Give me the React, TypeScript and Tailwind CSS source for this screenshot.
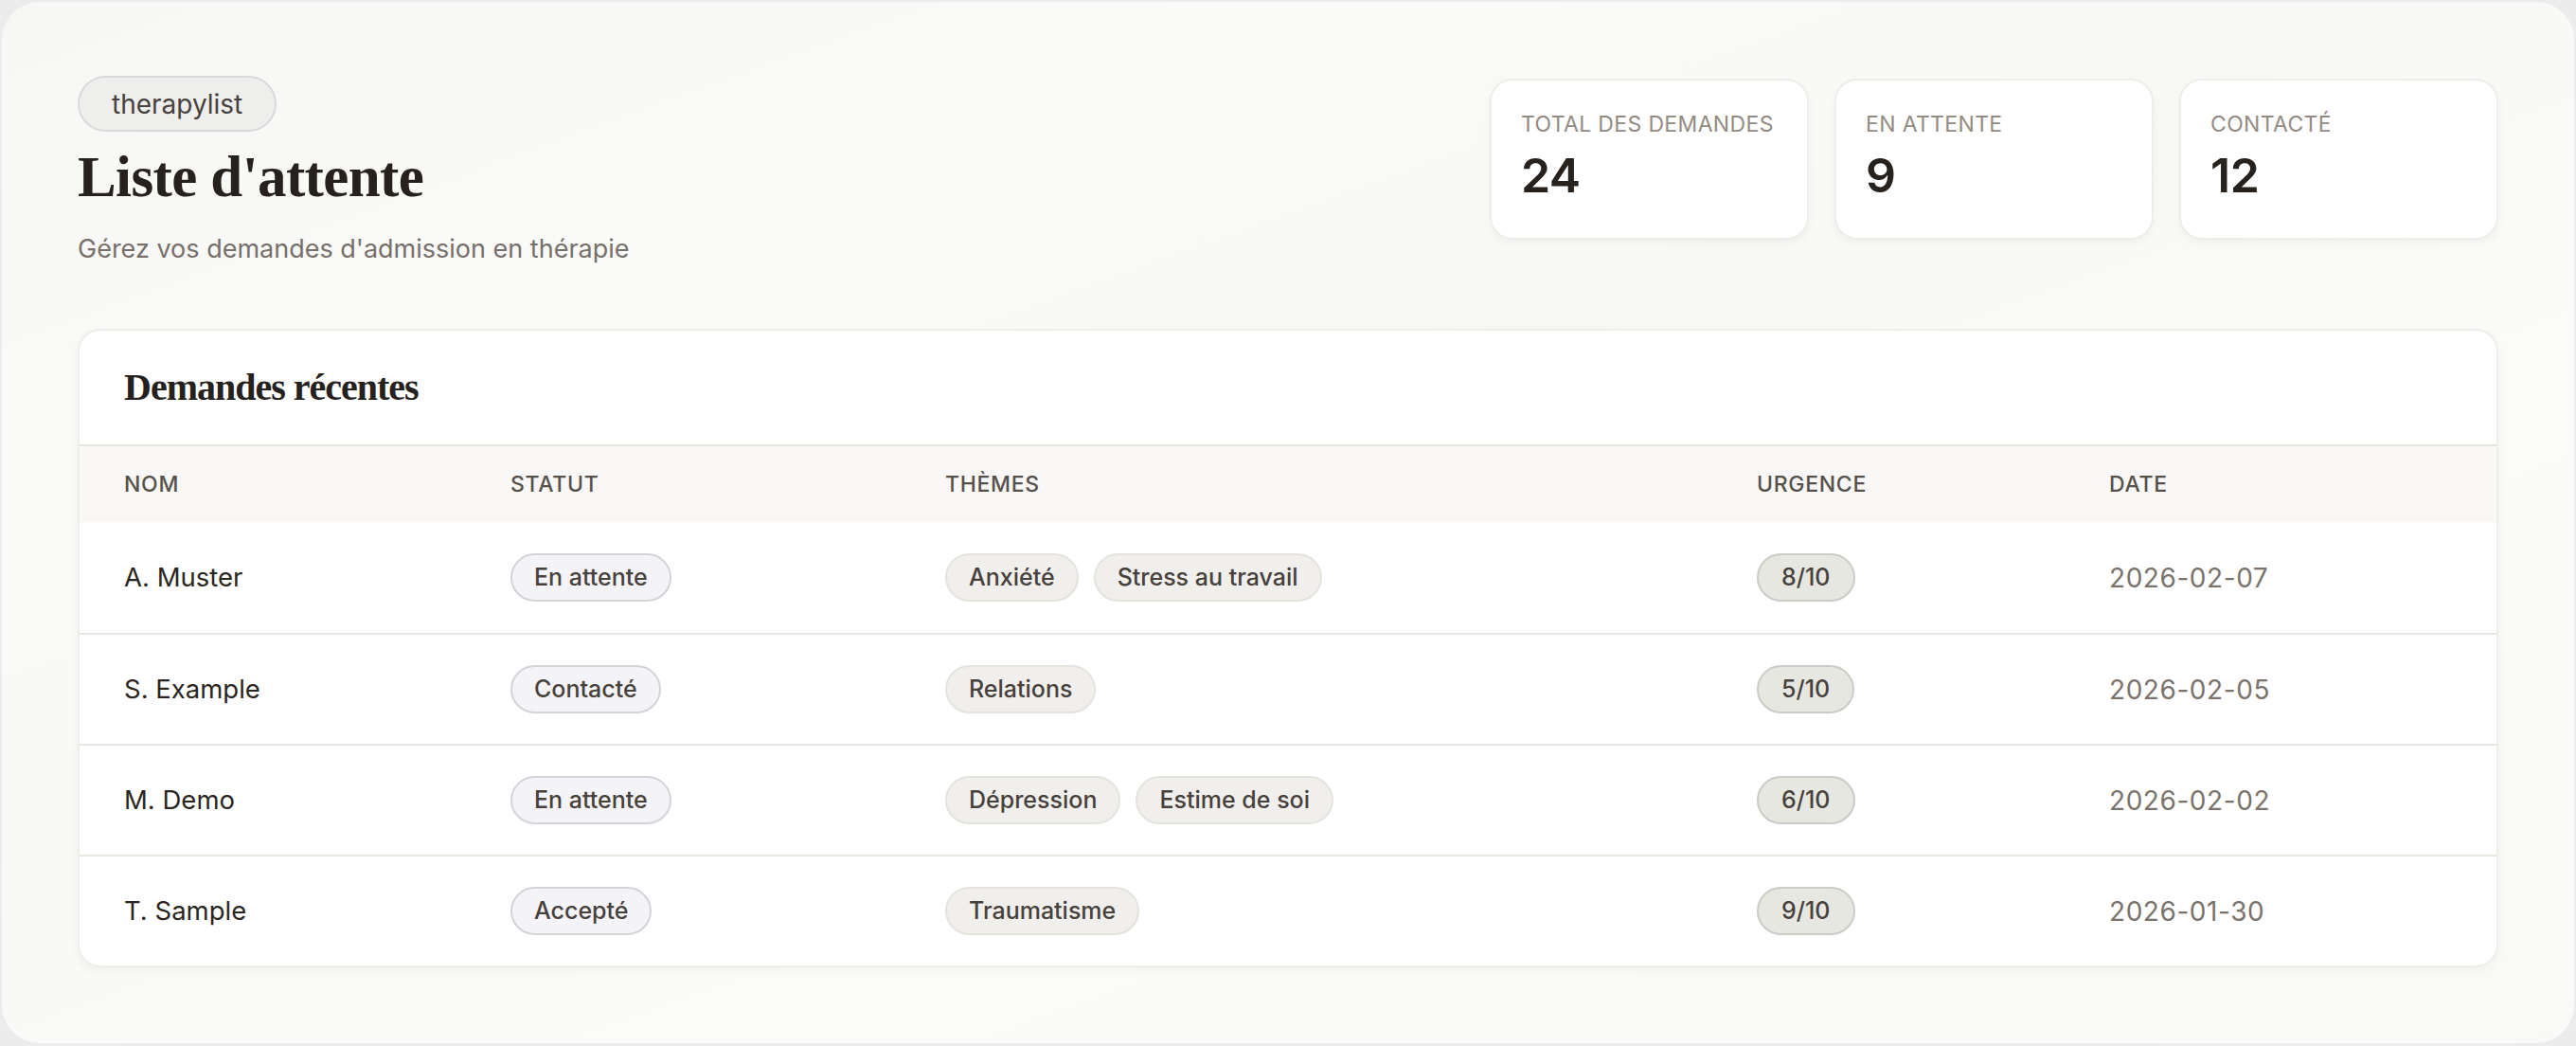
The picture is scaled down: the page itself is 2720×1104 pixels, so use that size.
import React from "react";

const sans = "font-['Inter','Noto_Sans',sans-serif]";
const serif = "font-['Liberation_Serif','DejaVu_Serif',serif]";

type Row = {
  name: string;
  status: string;
  themes: string[];
  urgency: string;
  date: string;
};

const rows: Row[] = [
  { name: "A. Muster", status: "En attente", themes: ["Anxiété", "Stress au travail"], urgency: "8/10", date: "2026-02-07" },
  { name: "S. Example", status: "Contacté", themes: ["Relations"], urgency: "5/10", date: "2026-02-05" },
  { name: "M. Demo", status: "En attente", themes: ["Dépression", "Estime de soi"], urgency: "6/10", date: "2026-02-02" },
  { name: "T. Sample", status: "Accepté", themes: ["Traumatisme"], urgency: "9/10", date: "2026-01-30" },
];

const stats = [
  { label: "Total des demandes", value: "24" },
  { label: "En attente", value: "9" },
  { label: "Contacté", value: "12" },
];

function StatCard({ label, value }: { label: string; value: string }) {
  return (
    <div className="w-[337px] h-[170px] rounded-[24px] border-2 border-[#eeedea] bg-white px-[31px] pt-[30px] shadow-[0_4px_10px_rgba(0,0,0,0.04)]">
      <div className="text-[23px] leading-[32px] uppercase tracking-[0.015em] text-[#938b82]">{label}</div>
      <div className="mt-[12px] text-[50px] leading-[52px] font-semibold tracking-[-0.01em] text-[#27221d]">{value}</div>
    </div>
  );
}

export default function App() {
  return (
    <div className={`${sans} w-[2720px] h-[1104px] bg-[#ececec] p-[2px]`}>
      <div className="h-[1099px] rounded-[40px] bg-[linear-gradient(160deg,#f7f7f5_0%,#fafaf9_25%,#f8f8f6_45%,#fbfbfa_65%,#f9f9f8_100%)] px-[80px] pt-[78px]">
        <div className="flex justify-between items-start">
          <div>
            <div className="inline-flex h-[59px] items-center rounded-full border-2 border-[#d9d9d9] bg-[#eeeeed] px-[34px] text-[28px] text-[#47423d]">
              therapylist
            </div>
            <h1 className={`${serif} mt-[15px] text-[61px] leading-[66px] font-bold tracking-[-0.01em] text-[#26211c]`}>
              Liste d'attente
            </h1>
            <p className="mt-[23px] text-[27px] leading-[40px] text-[#77706a]">
              Gérez vos demandes d'admission en thérapie
            </p>
          </div>
          <div className="flex gap-[27px] pt-[3px]">
            {stats.map((s) => (
              <StatCard key={s.label} label={s.label} value={s.value} />
            ))}
          </div>
        </div>

        <div className="mt-[64px] rounded-[24px] border-2 border-[#eeedea] bg-white shadow-[0_4px_12px_rgba(0,0,0,0.04)] overflow-hidden">
          <div className="h-[120px] flex items-center px-[47px]">
            <h2 className={`${serif} text-[40px] font-bold tracking-[-0.025em] text-[#26211c]`}>Demandes récentes</h2>
          </div>
          <div className="grid grid-cols-[407px_459px_857px_372px_1fr] h-[82px] items-center border-t-2 border-[#e6e4de] bg-[#f9f8f6] text-[23px] uppercase tracking-[0.03em] text-[#57514b] font-medium">
            <div className="pl-[47px]">Nom</div>
            <div className="pl-[48px]">Statut</div>
            <div className="pl-[48px]">Thèmes</div>
            <div className="pl-[48px]">Urgence</div>
            <div className="pl-[48px]">Date</div>
          </div>
          {rows.map((r, i) => (
            <div
              key={r.name}
              className={`grid grid-cols-[407px_459px_857px_372px_1fr] h-[117px] items-center ${i > 0 ? "border-t-2 border-[#e8e6e1]" : ""}`}
            >
              <div className="pl-[47px] text-[27.5px] text-[#2a2520]">{r.name}</div>
              <div className="pl-[48px]">
                <span className="inline-flex h-[51px] items-center rounded-full border-2 border-[#d4d3d8] bg-[#f4f3f8] px-[23px] text-[25px] font-medium text-[#47413c]">
                  {r.status}
                </span>
              </div>
              <div className="pl-[48px] flex gap-[16px]">
                {r.themes.map((t) => (
                  <span key={t} className="inline-flex h-[51px] items-center rounded-full border-2 border-[#e4e3de] bg-[#f0efec] px-[23px] text-[25px] font-medium text-[#47413c]">
                    {t}
                  </span>
                ))}
              </div>
              <div className="pl-[48px]">
                <span className="inline-flex h-[51px] items-center rounded-full border-2 border-[#cbcbc7] bg-[#e7e7e2] px-[24px] text-[25px] font-medium text-[#47413c]">
                  {r.urgency}
                </span>
              </div>
              <div className="pl-[48px] text-[28px] tracking-[0.02em] text-[#7a736c]">{r.date}</div>
            </div>
          ))}
        </div>
      </div>
    </div>
  );
}
